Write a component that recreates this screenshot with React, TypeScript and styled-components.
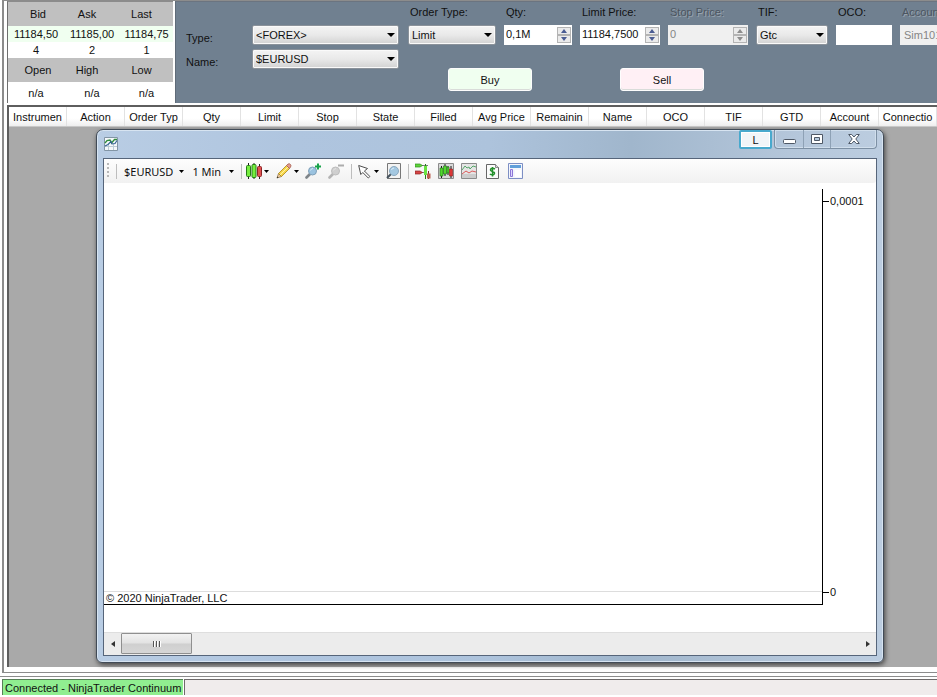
import React from "react";
import styled, { createGlobalStyle } from "styled-components";

const GlobalStyle = createGlobalStyle`
  *, *::before, *::after { box-sizing: border-box; }
  body { margin: 0; overflow: hidden; background: #ffffff; }
  body, button, input, select, table { font-family: "Liberation Sans", Arial, sans-serif; font-size: 11px; color: #111111; }
  button, input, select { margin: 0; padding: 0; border: 0; border-radius: 0; outline: 0; }
`;

const Shell = styled.div`
  display: flex;
  flex-direction: column;
  height: 100vh;
  min-height: 500px;
  overflow: hidden;
`;

const MainFrame = styled.main`
  flex: 1;
  min-height: 0;
  display: flex;
  flex-direction: column;
  gap: 2px;
  margin-left: 2px;
  padding: 0 0 5px 3px;
  border: solid #8c8c8c;
  border-width: 1px 0 1px 2px;
  background: #ffffff;
`;

const TopPanels = styled.div`
  display: flex;
  gap: 2px;
`;

/* Quote board */

const QuoteTable = styled.table`
  flex: none;
  width: 166px;
  height: 102px;
  table-layout: fixed;
  border-collapse: separate;
  border-spacing: 0;
  border-left: 1px solid #6f6f6f;
  border-top: 1px solid #8c8c8c;
  background: #ffffff;
  col:not(:last-child) { width: 56px; }
`;

const QuoteRow = styled.tr<{ $height: number; $bg?: string }>`
  height: ${(p) => p.$height}px;
  background: ${(p) => p.$bg ?? "#ffffff"};
  th, td {
    padding: 0;
    font-weight: normal;
    line-height: 14px;
    text-align: center;
    vertical-align: middle;
    white-space: nowrap;
  }
  th:first-child { padding-left: 4px; }
  th:not(:first-child) { padding-right: 10px; }
`;

/* Order entry */

const OrderPanel = styled.section`
  flex: 1;
  min-width: 0;
  display: flex;
  gap: 9px;
  padding: 3px 0 0 10px;
  overflow: hidden;
  background: #708090;
  border-left: 1px solid #5f6b78;
  border-top: 1px solid #6b7480;
`;

const InstrumentFields = styled.div`
  flex: none;
  display: grid;
  grid-template-columns: 66px 147px;
  grid-auto-rows: 20px;
  row-gap: 4px;
  padding-top: 20px;
  label { align-self: end; line-height: 14px; }
`;

const EntryColumn = styled.div`
  flex: 1;
  min-width: 0;
`;

const FieldRow = styled.div`
  display: flex;
  gap: 8px;
`;

const Field = styled.div<{ $width: number }>`
  flex: none;
  display: flex;
  flex-direction: column;
  gap: 6px;
  width: ${(p) => p.$width}px;
`;

const FieldLabel = styled.label<{ $off?: boolean }>`
  padding-left: 2px;
  line-height: 14px;
  white-space: nowrap;
  color: ${(p) => (p.$off ? "#4c5560" : "#111111")};
  text-shadow: ${(p) => (p.$off ? "1px 1px 0 #98a3ae" : "none")};
`;

const SelectBox = styled.div`
  display: grid;
  align-items: center;
  height: 20px;
  border: 1px solid #8b929a;
  border-radius: 2px;
  background: linear-gradient(#f4f4f4, #e9e9e9 50%, #d2d2d2);
  box-shadow: inset 0 0 0 1px #fafafa;
  > * { grid-area: 1 / 1; }
  svg { justify-self: end; margin-right: 3px; pointer-events: none; }
`;

const NativeSelect = styled.select`
  width: 100%;
  height: 18px;
  padding-left: 3px;
  appearance: none;
  background: transparent;
`;

const TextBox = styled.input`
  width: 100%;
  height: 20px;
  padding: 0 4px;
  background: #ffffff;
  &:disabled { background: #f0f0f0; color: #858585; }
`;

const SpinBox = styled.div<{ $off?: boolean }>`
  display: flex;
  height: 20px;
  padding: 2px 1px 2px 2px;
  background: ${(p) => (p.$off ? "#f0f0f0" : "#ffffff")};
  input {
    flex: 1;
    min-width: 0;
    height: 14px;
    background: transparent;
  }
  input:disabled { color: #858585; }
`;

const SpinButtons = styled.div`
  flex: none;
  display: flex;
  flex-direction: column;
  width: 14px;
`;

const SpinButton = styled.button`
  flex: 1;
  display: flex;
  align-items: center;
  justify-content: center;
  border: 1px solid #b4b4b4;
  background: #ebebeb;
  color: #4a5c93;
  &:disabled { color: #8d8d8d; }
`;

const ActionRow = styled.div`
  display: flex;
  gap: 88px;
  padding: 23px 0 11px 40px;
`;

const ActionButton = styled.button<{ $bg: string }>`
  width: 84px;
  height: 23px;
  border: 1px solid #fdfdfd;
  border-radius: 3px;
  background: ${(p) => p.$bg};
  box-shadow: inset 0 -1px 0 #d9dcd9;
`;

/* Orders and workspace */

const OrdersPanel = styled.section`
  flex: 1;
  min-height: 0;
  display: flex;
  flex-direction: column;
  border: solid #5e5e5e;
  border-width: 2px 0 0 2px;
`;

const OrdersTable = styled.table`
  flex: none;
  width: 928px;
  min-width: 100%;
  table-layout: fixed;
  border-collapse: separate;
  border-spacing: 0;
  background: linear-gradient(#ffffff 60%, #eeeeee);
  border-bottom: 1px solid #c8c8c8;
  th {
    height: 19px;
    padding: 0;
    border-right: 1px solid #e2e2e2;
    font-weight: normal;
    line-height: 18px;
    white-space: nowrap;
    overflow: hidden;
  }
`;

const Workspace = styled.div`
  position: relative;
  flex: 1;
  min-height: 0;
  background: #a9a9a9;
`;

/* Chart window floating on the workspace */

const ChartWindow = styled.section`
  position: absolute;
  inset: 2px 53px 4px 87px;
  display: flex;
  flex-direction: column;
  padding: 0 6px 6px;
  border: 1px solid #414b57;
  border-radius: 7px 7px 6px 6px;
  background: linear-gradient(90deg, #b9cde4, #afc5df 25%, #adc3dc 50%, #a0b6cc 68%, #b4c6da 88%, #bccde0);
  box-shadow: inset 0 0 0 1px #d7e4f1, 1px 2px 5px rgba(0, 0, 0, 0.6);
`;

const TitleBar = styled.header`
  flex: none;
  display: flex;
  justify-content: space-between;
  height: 28px;
  padding: 0 0 0 1px;
  > svg { margin-top: 7px; }
`;

const Caption = styled.div`
  display: flex;
  align-items: flex-start;
  gap: 2px;
`;

const LinkButton = styled.button`
  width: 33px;
  height: 19px;
  border: 2px solid #48a9cd;
  border-radius: 2px;
  background: #f1f5f8;
  box-shadow: inset 0 0 0 1px #ffffff;
`;

const CaptionGroup = styled.div`
  display: flex;
  height: 19px;
  border: 1px solid #7d90a4;
  border-top: 0;
  border-radius: 0 0 4px 4px;
  box-shadow: inset 0 0 0 1px #d0deec;
`;

const CaptionButton = styled.button<{ $width: number }>`
  display: flex;
  align-items: center;
  justify-content: center;
  width: ${(p) => p.$width}px;
  background: transparent;
  & + & { border-left: 1px solid #8ea1b5; }
`;

const WindowBody = styled.div`
  flex: 1;
  min-height: 0;
  display: flex;
  flex-direction: column;
  border: 1px solid #56657a;
  background: #ffffff;
`;

const Toolbar = styled.div`
  flex: none;
  display: flex;
  align-items: center;
  height: 24px;
  padding: 0 3px;
  background: linear-gradient(#fdfdfd, #f1f1f1);
  border-radius: 0 0 3px 0;
`;

const Grip = styled.div`
  width: 2px;
  height: 16px;
  background: repeating-linear-gradient(#b8b8b8 0 2px, transparent 2px 4px);
`;

const Divider = styled.div<{ $left: number; $right: number }>`
  width: 1px;
  height: 15px;
  margin: 0 ${(p) => p.$right}px 0 ${(p) => p.$left}px;
  background: #bdbdbd;
`;

const ToolButton = styled.button<{ $gap?: number; $after?: number }>`
  flex: none;
  display: flex;
  align-items: center;
  gap: ${(p) => p.$gap ?? 2}px;
  height: 22px;
  margin-right: ${(p) => p.$after ?? 7}px;
  background: transparent;
  font-family: "Noto Sans", "Open Sans", sans-serif;
  white-space: nowrap;
`;

const ChartArea = styled.div`
  flex: 1;
  min-height: 0;
  display: flex;
  padding: 6px 0 27px;
`;

const Plot = styled.div`
  flex: 1;
  display: flex;
  flex-direction: column;
  justify-content: flex-end;
  border: solid #000000;
  border-width: 0 1px 1px 0;
`;

const Copyright = styled.div`
  height: 13px;
  padding-left: 2px;
  border-top: 1px solid #dddddd;
  line-height: 12px;
`;

const PriceAxis = styled.div`
  flex: none;
  display: flex;
  flex-direction: column;
  justify-content: space-between;
  width: 53px;
  padding: 5px 0 6px;
`;

const AxisLabel = styled.div`
  display: flex;
  align-items: center;
  gap: 1px;
  line-height: 14px;
  &::before { content: ""; width: 6px; height: 1px; background: #000000; }
`;

const ScrollBar = styled.div`
  flex: none;
  display: flex;
  height: 23px;
  border-top: 1px solid #dedede;
  background: #ececec;
`;

const ScrollButton = styled.button`
  flex: none;
  display: flex;
  align-items: center;
  justify-content: center;
  width: 17px;
  height: 22px;
  background: transparent;
`;

const ScrollTrack = styled.div`
  flex: 1;
`;

const ScrollThumb = styled.button`
  display: flex;
  align-items: center;
  justify-content: center;
  width: 71px;
  height: 21px;
  border: 1px solid #8f8f8f;
  border-radius: 1px;
  background: linear-gradient(#f2f2f2, #e2e2e2 48%, #cfcfcf 52%, #d6d6d6);
`;

/* Status bar */

const StatusBar = styled.footer`
  flex: none;
  display: flex;
  gap: 1px;
  height: 24px;
  padding: 4px 0 2px 2px;
  border-top: 2px solid #ffffff;
  background: linear-gradient(#ffffff 0 1px, #8c8c8c 1px 2px, #ffffff 2px);
`;

const StatusText = styled.div`
  flex: none;
  padding: 0 2px;
  border: solid #567f56;
  border-width: 1px 0 0 1px;
  background: #90ee90;
  line-height: 16px;
  white-space: nowrap;
`;

const StatusFill = styled.div`
  flex: 1;
  border: solid #6e6a6a;
  border-width: 1px 0 0 1px;
  background: #f0ecec;
`;

const Arrow = ({ w = 9, h = 5 }: { w?: number; h?: number }) => (
  <svg width={w} height={h} viewBox="0 0 10 5" preserveAspectRatio="none" aria-hidden="true">
    <path d="M0 0h10L5 5z" fill="#000" />
  </svg>
);

const SmallArrow = () => <Arrow w={5} h={3} />;

const Picker = ({ id, value }: { id: string; value: string }) => (
  <SelectBox>
    <NativeSelect id={id} defaultValue={value}>
      <option>{value}</option>
    </NativeSelect>
    <Arrow w={8} h={4} />
  </SelectBox>
);

const Spinner = ({ id, value, off }: { id: string; value: string; off?: boolean }) => (
  <SpinBox $off={off}>
    <input id={id} defaultValue={value} disabled={off} />
    <SpinButtons>
      <SpinButton aria-label="Increase" disabled={off}>
        <svg width="6" height="4" viewBox="0 0 6 4"><path d="M0 4h6L3 0z" fill="currentColor" /></svg>
      </SpinButton>
      <SpinButton aria-label="Decrease" disabled={off}>
        <svg width="6" height="4" viewBox="0 0 6 4"><path d="M0 0h6L3 4z" fill="currentColor" /></svg>
      </SpinButton>
    </SpinButtons>
  </SpinBox>
);

const ChartIcon = () => (
  <svg width="14" height="14" viewBox="0 0 14 14" fill="none" aria-hidden="true">
    <path d="M.5 .5h13v13H.5z" fill="#f4f8fa" stroke="#8295a5" />
    <path d="M4.500 7v6M9.500 7v6M1 9.500h12" stroke="#bdcbd6" />
    <path d="M1 6l2-2.500 3-.5 1.500 3 3-3.500H13" stroke="#2f8b3c" strokeWidth="1.300" />
    <path d="M1 9l3-1.500 3-3 1 2.500 3-.5 2-3" stroke="#315f91" strokeWidth="1.100" />
  </svg>
);

const CandlesIcon = () => (
  <svg width="16" height="16" viewBox="0 0 16 16" aria-hidden="true">
    <path d="M2.500 0v16M8 0v16M13.500 1v15" stroke="#222" />
    <rect x=".5" y="2.500" width="4" height="11" rx="1" fill="#76ee3e" stroke="#267d18" />
    <rect x="6" y="1.500" width="4" height="13" rx="1" fill="#76ee3e" stroke="#267d18" />
    <rect x="11.500" y="3.500" width="4" height="10" rx="1" fill="#e05252" stroke="#8d2424" />
  </svg>
);

const PencilIcon = () => (
  <svg width="16" height="16" viewBox="0 0 16 16" aria-hidden="true">
    <path d="M1 15l1.500-4.500 3 3z" fill="#edc9a0" stroke="#8a6d3b" strokeWidth=".7" />
    <path d="M2.500 10.500L10.500 2.500l3 3-8 8z" fill="#f7d84b" stroke="#a8811c" strokeWidth=".8" />
    <path d="M4 12l8-8" stroke="#fff3a8" />
    <path d="M10.500 2.500L12 1q1.500-.8 2.500.5t0 2.500l-1 1.500z" fill="#e39a8d" stroke="#a35d4e" strokeWidth=".8" />
    <path d="M.8 15.200l.7-1.700 1 1z" fill="#222" />
  </svg>
);

const MagnifierIcon = ({ mode }: { mode: "in" | "out" }) => {
  const off = mode === "out";
  return (
    <svg width="17" height="16" viewBox="0 0 17 16" aria-hidden="true">
      <path d="M1.500 14.500l4-4" stroke={off ? "#b4b4b4" : "#7e8489"} strokeWidth="2.600" strokeLinecap="round" />
      <circle cx="7.500" cy="8" r="4" fill={off ? "#cfcfcf" : "#9bc3e0"} stroke={off ? "#bdbdbd" : "#80a0b8"} />
      <path d="M5.500 7.500q.5-2 2.500-2" stroke={off ? "#e3e3e3" : "#d9ecf8"} fill="none" />
      {off ? <path d="M10 2.500h6" stroke="#adadad" strokeWidth="2" /> : <path d="M10 3.500h6M13 .5v6" stroke="#18a34a" strokeWidth="2" />}
    </svg>
  );
};

const PointerIcon = () => (
  <svg width="13" height="15" viewBox="0 0 13 15" aria-hidden="true">
    <path d="M.7 1.500L2.800 10.500l2-2 5.500 5.500 1.600-1.500-5.500-5.500L9.500 4.500z" fill="#fff" stroke="#4c4c4c" />
  </svg>
);

const DataBoxIcon = () => (
  <svg width="15" height="16" viewBox="0 0 15 16" aria-hidden="true">
    <path d="M1.500 .5h13v15h-13z" fill="#f3f3f3" stroke="#777" />
    <path d="M1 15l4-4" stroke="#44515c" strokeWidth="2" />
    <circle cx="8" cy="8" r="4.500" fill="#a4c8e1" stroke="#8aa9bf" />
    <path d="M5.500 7q.5-2 2.500-2" stroke="#dfeffa" fill="none" />
  </svg>
);

const TraderIcon = () => (
  <svg width="16" height="16" viewBox="0 0 16 16" aria-hidden="true">
    <path d="M7 2.500h6M7 9.500h3" stroke="#7a7a7a" />
    <path d="M0 1h5l2.500 1.500L5 4H0z" fill="#5fd33a" stroke="#2f9120" strokeWidth=".7" />
    <path d="M0 8h5l2.500 1.500L5 11H0z" fill="#d64545" stroke="#8d2424" strokeWidth=".7" />
    <path d="M10.500 1v15" stroke="#2a7c1d" />
    <path d="M9 3h3v9H9z" fill="#6be341" />
    <path d="M13.500 8v8" stroke="#7b2727" />
    <path d="M12 10.500h3.500v5H12z" fill="#bd5c4c" />
  </svg>
);

const BarsIcon = () => (
  <svg width="16" height="16" viewBox="0 0 16 16" aria-hidden="true">
    <path d="M.5 .5h15v15H.5z" fill="#d9d9d9" stroke="#8b8b8b" />
    <path d="M3.500 3v12M7 1v12M10 3v9M13 3v12" stroke="#1b1b1b" />
    <path d="M2 5h3v8H2zM5.500 3h3v8h-3zM9 4h2v6H9z" fill="#52d92e" stroke="#246c19" strokeWidth=".6" />
    <path d="M11.500 6h3v7h-3z" fill="#dc3636" stroke="#8b1b1b" strokeWidth=".6" />
  </svg>
);

const IndicatorIcon = () => (
  <svg width="16" height="16" viewBox="0 0 16 16" fill="none" aria-hidden="true">
    <path d="M.5 .5h15v15H.5z" fill="#e5e5e5" stroke="#8b8b8b" />
    <path d="M1 11h14v4H1z" fill="#cccccc" />
    <path d="M1 7l3-4 2 2 2-1 1 2 3-3 3 1" stroke="#56a86a" />
    <path d="M1 11l4-3 3 2 3-2 4 1" stroke="#dc5959" />
  </svg>
);

const StrategyIcon = () => (
  <svg width="13" height="15" viewBox="0 0 13 15" aria-hidden="true">
    <path d="M.5 .5h9l3 3v11H.5z" fill="#fbfbfb" stroke="#666" />
    <path d="M9.500 .5v3h3" fill="#d5d5d5" stroke="#666" strokeWidth=".7" />
    <path d="M9 5Q6.500 3.500 5 4.700 3.500 6.500 6.500 7.500 9.500 8.500 8 10.300 6 11.500 3.800 10M6.500 3v9.500" stroke="#24902c" strokeWidth="1.500" fill="none" />
  </svg>
);

const PropertiesIcon = () => (
  <svg width="15" height="16" viewBox="0 0 15 16" aria-hidden="true">
    <path d="M.5 .5h14v15H.5z" fill="#f4f6fc" stroke="#7d8fc4" />
    <path d="M2 2h11v3H2z" fill="#619fda" />
    <path d="M2.500 6.500h2v7h-2z" fill="#ddd5ff" stroke="#8c77d7" />
    <path d="M7 7h6v7H7z" fill="#ffffff" />
  </svg>
);

const orderColumns = [
  "Instrumen", "Action", "Order Typ", "Qty", "Limit", "Stop", "State", "Filled",
  "Avg Price", "Remainin", "Name", "OCO", "TIF", "GTD", "Account", "Connectio",
];

const QuoteBoard = () => (
  <QuoteTable>
    <colgroup><col /><col /><col /></colgroup>
    <tbody>
      <QuoteRow $height={24} $bg="#c0c0c0"><th>Bid</th><th>Ask</th><th>Last</th></QuoteRow>
      <QuoteRow $height={16} $bg="#f0fff0"><td>11184,50</td><td>11185,00</td><td>11184,75</td></QuoteRow>
      <QuoteRow $height={16}><td>4</td><td>2</td><td>1</td></QuoteRow>
      <QuoteRow $height={24} $bg="#c0c0c0"><th>Open</th><th>High</th><th>Low</th></QuoteRow>
      <QuoteRow $height={21}><td>n/a</td><td>n/a</td><td>n/a</td></QuoteRow>
    </tbody>
  </QuoteTable>
);

const OrderEntry = () => (
  <OrderPanel>
    <InstrumentFields>
      <label htmlFor="type">Type:</label>
      <Picker id="type" value="<FOREX>" />
      <label htmlFor="name">Name:</label>
      <Picker id="name" value="$EURUSD" />
    </InstrumentFields>
    <EntryColumn>
      <FieldRow>
        <Field $width={88}><FieldLabel htmlFor="orderType">Order Type:</FieldLabel><Picker id="orderType" value="Limit" /></Field>
        <Field $width={68}><FieldLabel htmlFor="qty">Qty:</FieldLabel><Spinner id="qty" value="0,1M" /></Field>
        <Field $width={80}><FieldLabel htmlFor="limit">Limit Price:</FieldLabel><Spinner id="limit" value="11184,7500" /></Field>
        <Field $width={80}><FieldLabel htmlFor="stop" $off>Stop Price:</FieldLabel><Spinner id="stop" value="0" off /></Field>
        <Field $width={72}><FieldLabel htmlFor="tif">TIF:</FieldLabel><Picker id="tif" value="Gtc" /></Field>
        <Field $width={56}><FieldLabel htmlFor="oco">OCO:</FieldLabel><TextBox id="oco" /></Field>
        <Field $width={88}><FieldLabel htmlFor="account" $off>Accoun</FieldLabel><TextBox id="account" defaultValue="Sim101" disabled /></Field>
      </FieldRow>
      <ActionRow>
        <ActionButton $bg="#f0fff0">Buy</ActionButton>
        <ActionButton $bg="#fff0f5">Sell</ActionButton>
      </ActionRow>
    </EntryColumn>
  </OrderPanel>
);

const ChartToolbar = () => (
  <Toolbar>
    <Grip />
    <Divider $left={7} $right={7} />
    <ToolButton $gap={6} $after={8}>$EURUSD<SmallArrow /></ToolButton>
    <ToolButton $gap={8} $after={0}>1 Min<SmallArrow /></ToolButton>
    <Divider $left={7} $right={4} />
    <ToolButton aria-label="Chart style"><CandlesIcon /><SmallArrow /></ToolButton>
    <ToolButton aria-label="Drawing tools" $after={6}><PencilIcon /><SmallArrow /></ToolButton>
    <ToolButton aria-label="Zoom in" $after={6}><MagnifierIcon mode="in" /></ToolButton>
    <ToolButton aria-label="Zoom out" $after={0}><MagnifierIcon mode="out" /></ToolButton>
    <Divider $left={6} $right={6} />
    <ToolButton aria-label="Cursor" $gap={3}><PointerIcon /><SmallArrow /></ToolButton>
    <ToolButton aria-label="Data box" $after={0}><DataBoxIcon /></ToolButton>
    <Divider $left={7} $right={6} />
    <ToolButton aria-label="Chart trader"><TraderIcon /></ToolButton>
    <ToolButton aria-label="Data series"><BarsIcon /></ToolButton>
    <ToolButton aria-label="Indicators" $after={9}><IndicatorIcon /></ToolButton>
    <ToolButton aria-label="Strategies" $after={9}><StrategyIcon /></ToolButton>
    <ToolButton aria-label="Properties"><PropertiesIcon /></ToolButton>
  </Toolbar>
);

const Chart = () => (
  <ChartWindow>
    <TitleBar>
      <ChartIcon />
      <Caption>
        <LinkButton>L</LinkButton>
        <CaptionGroup>
          <CaptionButton $width={28} aria-label="Minimize">
            <svg width="13" height="14" viewBox="0 0 13 14"><rect x=".5" y="7.500" width="12" height="4" rx="1" fill="#fff" stroke="#4e5866" /></svg>
          </CaptionButton>
          <CaptionButton $width={27} aria-label="Maximize">
            <svg width="12" height="10" viewBox="0 0 12 10"><path d="M.5 .5h11v9H.5z" fill="#fff" stroke="#4e5866" /><path d="M3.500 3.500h5v3h-5z" fill="#b5c9dd" stroke="#4e5866" /></svg>
          </CaptionButton>
          <CaptionButton $width={46} aria-label="Close">
            <svg width="12" height="10" viewBox="0 0 12 10"><path d="M.7 .5h3L6 3 8.300 .5h3L7.800 5l3.500 4.500h-3L6 7 3.700 9.500h-3L4.200 5z" fill="#fff" stroke="#4e5866" /></svg>
          </CaptionButton>
        </CaptionGroup>
      </Caption>
    </TitleBar>
    <WindowBody>
      <ChartToolbar />
      <ChartArea>
        <Plot><Copyright>© 2020 NinjaTrader, LLC</Copyright></Plot>
        <PriceAxis><AxisLabel>0,0001</AxisLabel><AxisLabel>0</AxisLabel></PriceAxis>
      </ChartArea>
      <ScrollBar>
        <ScrollButton aria-label="Scroll left"><svg width="4" height="6" viewBox="0 0 4 6"><path d="M4 0v6L0 3z" fill="#333" /></svg></ScrollButton>
        <ScrollTrack>
          <ScrollThumb aria-label="Scroll position"><svg width="8" height="6" viewBox="0 0 8 6"><path d="M.5 0v6M3.500 0v6M6.500 0v6" stroke="#555" /><path d="M1.500 0v6M4.500 0v6M7.500 0v6" stroke="#fff" /></svg></ScrollThumb>
        </ScrollTrack>
        <ScrollButton aria-label="Scroll right"><svg width="4" height="6" viewBox="0 0 4 6"><path d="M0 0v6l4-3z" fill="#333" /></svg></ScrollButton>
      </ScrollBar>
    </WindowBody>
  </ChartWindow>
);

export default function App() {
  return (
    <>
      <GlobalStyle />
      <Shell>
        <MainFrame>
          <TopPanels>
            <QuoteBoard />
            <OrderEntry />
          </TopPanels>
          <OrdersPanel>
            <OrdersTable>
              <thead><tr>{orderColumns.map((c) => <th key={c} scope="col">{c}</th>)}</tr></thead>
            </OrdersTable>
            <Workspace><Chart /></Workspace>
          </OrdersPanel>
        </MainFrame>
        <StatusBar>
          <StatusText>Connected - NinjaTrader Continuum</StatusText>
          <StatusFill />
        </StatusBar>
      </Shell>
    </>
  );
}
